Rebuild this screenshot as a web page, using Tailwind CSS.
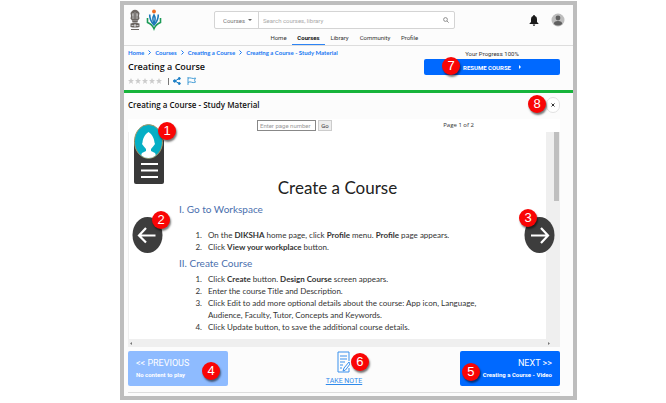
<!DOCTYPE html>
<html lang="en">
<head>
<meta charset="utf-8">
<meta name="viewport" content="width=device-width, initial-scale=1">
<title>Creating a Course - Study Material</title>
<script src="https://cdn.jsdelivr.net/npm/@tailwindcss/browser@4"></script>
</head>
<body class="bg-white pt-px pr-[89px] pl-[120px] font-['Open_Sans',sans-serif] text-[#333]">
<div class="border-4 border-[#bdbdbd] bg-[#fcfcfc]">

  <header class="border-b border-[#ddd]">
    <div class="flex items-center pt-1 pr-2 pl-1">
      <div class="flex w-[86px] items-center gap-1">
        <svg class="h-[22px] w-[14px]" viewBox="0 0 14 22" role="img" aria-label="National emblem" fill="#6b6560">
          <path d="M4 2Q7-.5 10 2L11.500 4L11 7L11.500 9.500L10 11.500H4L2.500 9.500L3 7L2.500 4Z"/>
          <path d="M4 11.500h6l-.5 2H4.500z"/><path d="M2.500 14.500Q7 13 11.500 14.500V18Q7 19 2.500 18z"/><path d="M3 20.500h8" stroke="#6b6560"/>
          <path d="M5 4v6M9 4v6M4 6h1.500M8.500 6h1.500M3.500 16.500h2M8.500 16.500h2" stroke="#ddd" stroke-width=".8"/>
          <circle cx="7" cy="16.500" r="1.200" fill="#ccc"/><path d="M7 3v7" stroke="#aaa" stroke-width=".7"/>
        </svg>
        <svg class="h-[22px] w-4" viewBox="0 0 16 22" role="img" aria-label="Diksha" fill="none" stroke-width="1.600">
          <circle cx="8" cy="2.500" r="1.900" fill="#ef6a20"/>
          <path d="M8 6Q5.800 9.500 8 14.500Q10.200 9.500 8 6Z" stroke="#1c78b8" stroke-width="1.500"/>
          <path d="M3.700 5.500Q3.500 11 8 16Q12.500 11 12.300 5.500" stroke="#1c78b8"/>
          <path d="M1.500 9V13.500Q6 15 8 19.800Q10 15 14.500 13.500V9" stroke="#1d9b57"/>
        </svg>
      </div>
      <form class="flex h-[18px] w-[241px] items-stretch rounded-xs border border-[#d4d4d4] bg-white font-['Roboto',sans-serif] text-[6px] text-[#777]">
        <div class="relative flex w-[44px] items-center border-r border-[#d4d4d4]">
          <select aria-label="Search in" class="w-full appearance-none bg-transparent py-1 pl-2 outline-none"><option>Courses</option></select>
          <svg class="pointer-events-none absolute right-1.5 h-[2px] w-1" viewBox="0 0 4 2"><path d="M0 0h4L2 2z" fill="#666"/></svg>
        </div>
        <input type="search" aria-label="Search courses, library" placeholder="Search courses, library" class="min-w-0 flex-1 px-1 outline-none placeholder:text-[#aaa]">
        <button type="button" aria-label="Search" class="mr-0.5 flex w-3 items-center justify-center">
          <svg class="size-[6px]" viewBox="0 0 6 6" fill="none" stroke="#777" stroke-width=".8"><circle cx="2.500" cy="2.500" r="1.900"/><path d="M4 4l1.700 1.700"/></svg>
        </button>
      </form>
      <div class="ml-auto flex items-center gap-3">
        <button type="button" aria-label="Notifications"><svg class="h-[11px] w-[10px]" viewBox="0 0 10 11" fill="#1b1b1b"><path d="M5 0Q6 0 6 1Q8 1.600 8 4V7L9.500 8.500V9H.5V8.500L2 7V4Q2 1.600 4 1Q4 0 5 0ZM3.700 9.600H6.300Q6 11 5 11Q4 11 3.700 9.600Z"/></svg></button>
        <button type="button" aria-label="Account"><svg class="h-[14px] w-[14px]" viewBox="0 0 14 14"><circle cx="7" cy="7" r="6.500" fill="#bdbdbd"/><circle cx="7" cy="5" r="2.400" fill="#606060"/><path d="M2.800 11Q2.800 8 7 8Q11.200 8 11.200 11Q7 14 2.800 11Z" fill="#606060"/></svg></button>
      </div>
    </div>
    <nav class="ml-[141px] flex h-[14px] items-stretch font-['Roboto',sans-serif] text-[6px] leading-[13px]">
      <a href="#" class="w-[27px] text-center">Home</a>
      <a href="#" class="w-[33px] border-b border-[#2d84f5] text-center font-bold text-[#111]">Courses</a>
      <a href="#" class="w-[29px] text-center">Library</a>
      <a href="#" class="w-[42px] text-center">Community</a>
      <a href="#" class="w-[27px] text-center">Profile</a>
    </nav>
  </header>

  <section class="flex h-[44px] items-start justify-between pr-[13px] pl-1">
    <div>
      <nav aria-label="Breadcrumb" class="flex items-center gap-1 pt-0.5 font-['Lato',sans-serif] text-[6px] leading-[9px] font-bold whitespace-nowrap text-[#1877f2]">
        <a href="#">Home</a><svg class="h-[5px] w-[3px]" viewBox="0 0 3 5" fill="none" stroke="#1877f2"><path d="M.5.5l2 2-2 2"/></svg>
        <a href="#">Courses</a><svg class="h-[5px] w-[3px]" viewBox="0 0 3 5" fill="none" stroke="#1877f2"><path d="M.5.5l2 2-2 2"/></svg>
        <a href="#">Creating a Course</a><svg class="h-[5px] w-[3px]" viewBox="0 0 3 5" fill="none" stroke="#1877f2"><path d="M.5.5l2 2-2 2"/></svg>
        <a href="#">Creating a Course - Study Material</a>
      </nav>
      <h1 class="pt-1 text-[9px] leading-[12px] font-semibold text-[#111]">Creating a Course</h1>
      <div class="flex items-center pt-1">
        <svg class="h-[6px] w-[34px]" viewBox="0 0 34 6" fill="#ccc" role="img" aria-label="No rating">
          <path id="star" d="M3 0l.9 2H6L4.300 3.500 5 6 3 4.600 1 6 1.700 3.500 0 2H2.100z"/>
          <use href="#star" x="7"/><use href="#star" x="14"/><use href="#star" x="21"/><use href="#star" x="28"/>
        </svg>
        <span class="mr-1 ml-1.5 h-[7px] w-px bg-[#777]"></span>
        <button type="button" aria-label="Share"><svg class="size-2" viewBox="0 0 8 8" fill="#1b7fc6" stroke="#1b7fc6"><path d="M6.200 1.500L2 4l4.200 2.500" fill="none"/><circle cx="6.300" cy="1.500" r="1"/><circle cx="1.700" cy="4" r="1.200"/><circle cx="6.300" cy="6.500" r="1"/></svg></button>
        <button type="button" aria-label="Flag" class="ml-1.5"><svg class="h-2 w-[9px]" viewBox="0 0 9 8" fill="none" stroke="#3494d3" stroke-width=".9"><path d="M1 0v8M1 1.200Q3 .5 4.500 1.200T8.500 1L7.500 3.200 8.500 5.200Q6 6 4.500 5.200T1 5.400"/></svg></button>
      </div>
    </div>
    <div class="w-[136px] text-center font-['Roboto',sans-serif]">
      <p class="pt-[3px] text-[6px] leading-[10px]">Your Progress 100%</p>
      <button type="button" class="relative flex h-4 w-full items-center justify-center gap-2 rounded-xs bg-[#0069ff] text-[6px] font-bold text-white">
        RESUME COURSE
        <svg class="h-1 w-[2px]" viewBox="0 0 2 4"><path d="M0 0l2 2-2 2z" fill="#fff"/></svg>
        <span class="absolute top-[-2px] left-[18px] flex size-[18px] items-center justify-center rounded-full bg-[#f90505] font-['Liberation_Sans',sans-serif] text-[13px] font-normal shadow-[1px_2px_2px_#0008]">7</span>
      </button>
    </div>
  </section>

  <main class="border-t-3 border-[#17b43b] pr-[13px] pb-[3px] pl-1">
    <div class="mb-[3px] flex h-[23px] items-center justify-between">
      <h2 class="text-[8px] font-semibold text-[#111]">Creating a Course - Study Material</h2>
      <button type="button" aria-label="Close" class="relative flex h-4 w-[14px] items-center justify-center rounded-full border border-[#e2e2e2] bg-white">
        <svg class="size-1" viewBox="0 0 4 4" stroke="#333"><path d="M.5.5l3 3M3.500.5l-3 3"/></svg>
        <span class="absolute top-[-3px] right-[13px] flex size-[18px] items-center justify-center rounded-full bg-[#f90505] font-['Liberation_Sans',sans-serif] text-[13px] text-white shadow-[1px_2px_2px_#0008]">8</span>
      </button>
    </div>

    <section class="relative bg-white" aria-label="Document viewer">
      <div class="flex h-[13px] items-center pl-[129px]">
        <form class="flex items-center gap-0.5 text-[6px]">
          <input type="text" aria-label="Page number" placeholder="Enter page number" class="h-[11px] w-[59px] border border-[#888] bg-white px-0.5 font-['Roboto',sans-serif] outline-none placeholder:text-[#999]">
          <button type="button" class="h-[11px] w-[14px] border border-[#ccc] bg-[#eee] font-['Roboto',sans-serif] leading-[9px]">Go</button>
        </form>
        <span class="mr-[86px] ml-auto text-[6px]">Page 1 of 2</span>
      </div>
      <div class="flex">
        <article class="min-w-0 flex-1 border-l border-[#eee] pl-[50px] font-['Lato','Open_Sans',sans-serif]">
          <h3 class="mr-[50px] pt-[44px] text-center text-[17px] leading-[24px] text-[#222]">Create a Course</h3>
          <h4 class="text-[10px] leading-[19px] text-[#4a6fae]">I. Go to Workspace</h4>
          <ol class="mt-[10px] list-decimal pl-[25px] text-[8px] leading-[12px] whitespace-nowrap">
            <li class="pl-1">On the <b>DIKSHA</b> home page, click <b>Profile</b> menu. <b>Profile</b> page appears.</li>
            <li class="pl-1">Click <b>View your workplace</b> button.</li>
          </ol>
          <h4 class="text-[10px] leading-[20px] text-[#4a6fae]">II. Create Course</h4>
          <ol class="list-decimal pb-[6px] pl-[25px] text-[8px] leading-[12px] whitespace-nowrap">
            <li class="pl-1">Click <b>Create</b> button. <b>Design Course</b> screen appears.</li>
            <li class="pl-1">Enter the course Title and Description.</li>
            <li class="pl-1">Click Edit to add more optional details about the course: App icon, Language,<br>Audience, Faculty, Tutor, Concepts and Keywords.</li>
            <li class="pl-1">Click Update button, to save the additional course details.</li>
          </ol>
        </article>
        <div class="flex w-[14px] justify-end bg-[#efefef] pr-px"><span class="h-[69px] w-[5px] bg-[#bfbfbf]"></span></div>
      </div>
      <div class="flex h-2 items-center justify-between bg-[#efefef] px-0.5">
        <svg class="h-[3px] w-[2px]" viewBox="0 0 2 3"><path d="M2 0v3L0 1.500z" fill="#777"/></svg>
        <svg class="mr-2 h-[3px] w-[2px]" viewBox="0 0 2 3"><path d="M0 0v3l2-1.500z" fill="#777"/></svg>
      </div>

      <button type="button" aria-label="Profile menu" class="absolute top-[5px] left-1.5">
        <svg class="h-[61px] w-[30px]" viewBox="0 0 30 61">
          <rect y="15" width="30" height="45" rx="2" fill="#393939"/>
          <ellipse cx="14.500" cy="17.500" rx="14" ry="17" fill="#05afc5" stroke="#a59767"/>
          <path d="M14.500 8C12 9.500 9 13 8.500 18.500L8 20L9.500 22L12 25V27L8 29Q7 30 7.500 31.500Q10.500 34 14.500 34Q18.500 34 21.500 31.500Q22 30 21 29L17 27V25L19.500 22L21 20L20.500 18.500C20 13 17 9.500 14.500 8Z" fill="#fff"/>
          <path d="M7 40h17M7 46.500h17M7 53h17" stroke="#fff" stroke-width="2"/>
        </svg>
        <span class="absolute top-[-2px] left-[24px] flex size-[18px] items-center justify-center rounded-full bg-[#f90505] font-['Liberation_Sans',sans-serif] text-[13px] text-white shadow-[1px_2px_2px_#0008]">1</span>
      </button>
      <button type="button" aria-label="Previous page" class="absolute top-[98px] left-1">
        <svg class="h-9 w-[31px]" viewBox="0 0 31 36"><ellipse cx="15.500" cy="18" rx="15" ry="18" fill="#3d3d3d"/><path d="M23.500 18.500H7.500M14 11L7 18.500l7 7" fill="none" stroke="#fff" stroke-width="2.200"/></svg>
        <span class="absolute top-[-6px] left-5 flex size-[18px] items-center justify-center rounded-full bg-[#f90505] font-['Liberation_Sans',sans-serif] text-[13px] text-white shadow-[1px_2px_2px_#0008]">2</span>
      </button>
      <button type="button" aria-label="Next page" class="absolute top-[98px] right-[5px]">
        <svg class="h-9 w-[31px]" viewBox="0 0 31 36"><ellipse cx="15.500" cy="18" rx="15" ry="18" fill="#3d3d3d"/><path d="M7 18.500h16.500M17 11l7 7.500-7 7.500" fill="none" stroke="#fff" stroke-width="2.200"/></svg>
        <span class="absolute top-[-8px] left-[-5px] flex size-[18px] items-center justify-center rounded-full bg-[#f90505] font-['Liberation_Sans',sans-serif] text-[13px] text-white shadow-[1px_2px_2px_#0008]">3</span>
      </button>
    </section>

    <footer class="mt-1 flex items-center justify-between border-b border-[#ddd] pb-[6px] font-['Roboto',sans-serif]">
      <button type="button" class="relative h-[35px] w-[100px] rounded-xs bg-[#8ebbff] px-2 text-left text-white">
        <span class="block text-[9px] leading-[12px]">&lt;&lt; PREVIOUS</span>
        <span class="block text-[6px] leading-[12px] font-bold">No content to play</span>
        <span class="absolute top-[11px] left-[74px] flex size-[18px] items-center justify-center rounded-full bg-[#f90505] font-['Liberation_Sans',sans-serif] text-[13px] shadow-[1px_2px_2px_#0008]">4</span>
      </button>
      <a href="#" class="relative flex flex-col items-center text-[#2f8aeb]">
        <svg class="h-[22px] w-[13px]" viewBox="0 0 13 22" fill="none" stroke="#3b91ed"><path d="M12 10V1H1v20h11v-4M3 5h7M3 8h7M3 11h5M3 14h3M3 17h2"/><path d="M12 11l-5 6-1 3 2.500-1L13 13z"/></svg>
        <span class="mt-1 font-['Roboto',sans-serif] text-[7px] leading-[9px] underline">TAKE NOTE</span>
        <span class="absolute top-[2px] left-[25px] flex size-[18px] items-center justify-center rounded-full bg-[#f90505] font-['Liberation_Sans',sans-serif] text-[13px] text-white shadow-[1px_2px_2px_#0008]">6</span>
      </a>
      <button type="button" class="relative h-[35px] w-[100px] rounded-xs bg-[#0069ff] px-2 text-right text-white">
        <span class="block text-[9px] leading-[12px]">NEXT &gt;&gt;</span>
        <span class="block text-[6px] leading-[12px] font-bold">Creating a Course - Video</span>
        <span class="absolute top-[12px] left-[2px] flex size-[18px] items-center justify-center rounded-full bg-[#f90505] font-['Liberation_Sans',sans-serif] text-[13px] shadow-[1px_2px_2px_#0008]">5</span>
      </button>
    </footer>
  </main>
</div>
</body>
</html>
